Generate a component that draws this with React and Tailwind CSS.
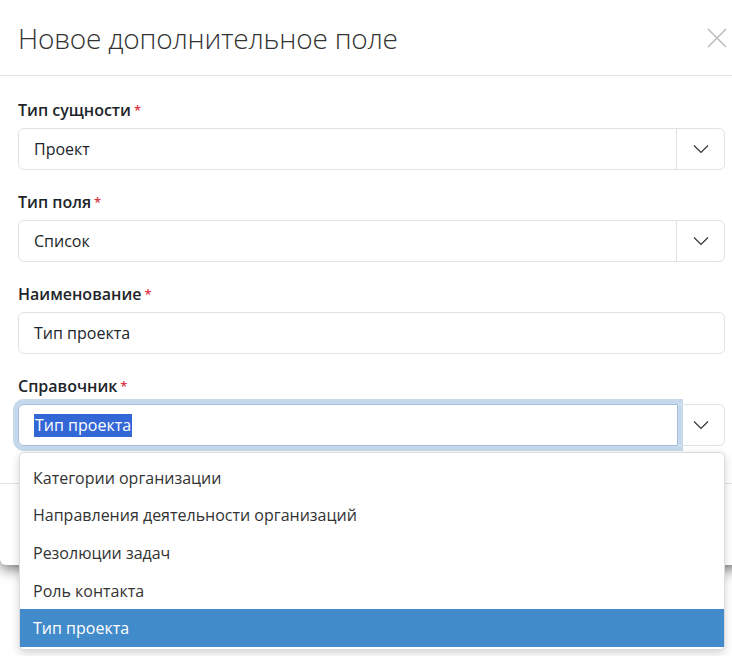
import React from "react";

const FONT = { fontFamily: '"Open Sans", "Noto Sans", sans-serif' };

function Chevron() {
  return (
    <svg width="16" height="10" viewBox="0 0 16 10" fill="none">
      <path d="M1 1.5 L8 8.5 L15 1.5" stroke="#333" strokeWidth="1.2" />
    </svg>
  );
}

function Label({ children }) {
  return (
    <div className="mb-[6px] h-6 text-[16px] leading-6 font-semibold text-[#212529]">
      {children}
      <span className="ml-[3px] text-[#dc3545] text-[13px] align-top">*</span>
    </div>
  );
}

function Select({ value }) {
  return (
    <div className="flex h-[42px] rounded-[6px] border border-[#dee2e6] bg-white">
      <div className="flex-1 flex items-center pl-[15px] text-[16px] text-[#212529]">
        {value}
      </div>
      <div className="w-[48px] border-l border-[#dee2e6] flex items-center justify-center">
        <Chevron />
      </div>
    </div>
  );
}

const options = [
  "Категории организации",
  "Направления деятельности организаций",
  "Резолюции задач",
  "Роль контакта",
  "Тип проекта",
];

export default function App() {
  return (
    <div className="relative h-[656px] w-[732px] overflow-hidden bg-white" style={FONT}>
      <div className="w-[744px] rounded-b-[6px] bg-white shadow-[0_4px_14px_rgba(0,0,0,0.55)]">
        {/* header */}
        <div className="flex h-[76px] items-center justify-between border-b border-[#dee2e6] pl-[18px] pr-[17px]">
          <h1 className="text-[28px] font-light text-[#333] tracking-[-0.2px]">
            Новое дополнительное поле
          </h1>
          <svg width="20" height="20" viewBox="0 0 20 20">
            <path d="M1 1 L19 19 M19 1 L1 19" stroke="#bdbdbd" strokeWidth="1.6" />
          </svg>
        </div>

        {/* body */}
        <div className="pl-[18px] pr-[19px] pt-[22px] pb-[17px]">
          <Label>Тип сущности</Label>
          <div className="mb-[20px]">
            <Select value="Проект" />
          </div>

          <Label>Тип поля</Label>
          <div className="mb-[20px]">
            <Select value="Список" />
          </div>

          <Label>Наименование</Label>
          <div className="mb-[20px] flex h-[42px] items-center rounded-[6px] border border-[#dee2e6] pl-[15px] text-[16px] text-[#212529]">
            Тип проекта
          </div>

          <Label>Справочник</Label>
          <div className="mb-[20px] flex h-[42px]">
            <div className="flex flex-1 items-center rounded-l-[6px] border border-[#9fbfdc] pl-[15px] text-[16px] shadow-[0_0_0_5px_#c6d9ec]">
              <span className="bg-[#3467d6] text-white leading-[23px] px-[1px]">Тип проекта</span>
            </div>
            <div className="flex w-[47px] items-center justify-center rounded-r-[6px] border border-l-0 border-[#dee2e6]">
              <Chevron />
            </div>
          </div>
        </div>

        {/* footer */}
        <div className="h-[82px] border-t border-[#dee2e6]" />
      </div>

      {/* open dropdown */}
      <div className="absolute left-[19px] top-[452px] w-[706px] rounded-[5px] border border-[#dcdcdc] bg-white pt-[6px] pb-[2px] shadow-[0_3px_8px_rgba(0,0,0,0.18)]">
        {options.map((o, i) => (
          <div
            key={o}
            className={
              "flex h-[37.6px] items-center pl-[13px] text-[16px] " +
              (i === options.length - 1 ? "bg-[#428bca] text-white" : "text-[#333]")
            }
          >
            {o}
          </div>
        ))}
      </div>
    </div>
  );
}
